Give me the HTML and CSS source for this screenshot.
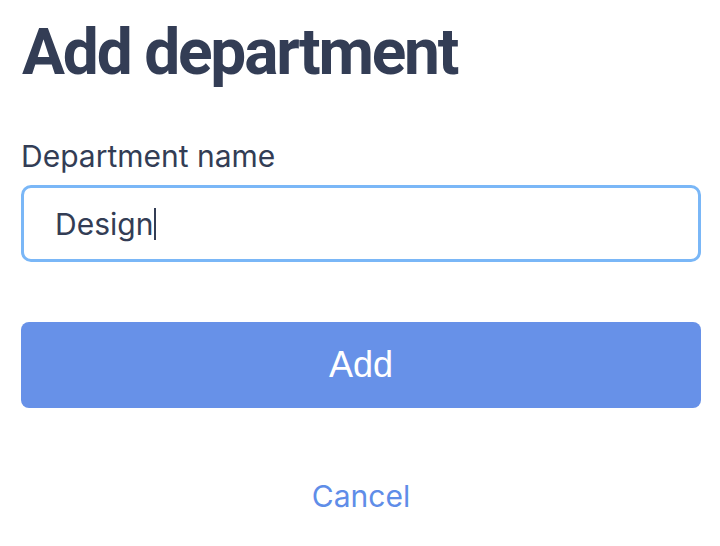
FILE: index.html
```html
<!DOCTYPE html>
<html>
<head>
<meta charset="utf-8">
<link rel="stylesheet" href="styles.css">
</head>
<body>
<main class="page">
  <h1 class="title">Add department</h1>
  <label class="label" for="dept">Department name</label>
  <div class="input"><span class="value">Design</span><span class="caret"></span></div>
  <button class="btn">Add</button>
  <a class="cancel">Cancel</a>
</main>
</body>
</html>
```
FILE: styles.css
```css
html, body { margin: 0; padding: 0; background: #fff; }
.page {
  display: flex;
  flex-direction: column;
  padding: 0 19px 0 21px;
  font-family: Inter, Roboto, "Liberation Sans", sans-serif;
  color: #333d55;
}
.title {
  margin: 15px 0 0 1px;
  font-family: Roboto, Inter, sans-serif;
  font-size: 64px;
  font-weight: 700;
  line-height: 75px;
  letter-spacing: -2.2px;
}
.label {
  margin-top: 48px;
  font-size: 30px;
  line-height: 36px;
}
.input {
  margin-top: 11px;
  height: 71px;
  border: 3px solid #7ab7f7;
  border-radius: 10px;
  display: flex;
  align-items: center;
  padding-left: 31px;
}
.value { font-size: 30px; line-height: 36px; }
.caret { width: 2px; height: 32px; background: #333d55; margin-left: 1px; }
.btn {
  margin-top: 60px;
  height: 86px;
  border: none;
  border-radius: 8px;
  background: #6791e8;
  color: #fff;
  font-family: "Liberation Sans", Arial, sans-serif;
  font-size: 36px;
}
.cancel {
  margin-top: 70px;
  align-self: center;
  color: #5f8de8;
  font-size: 30px;
  line-height: 36px;
}
```
